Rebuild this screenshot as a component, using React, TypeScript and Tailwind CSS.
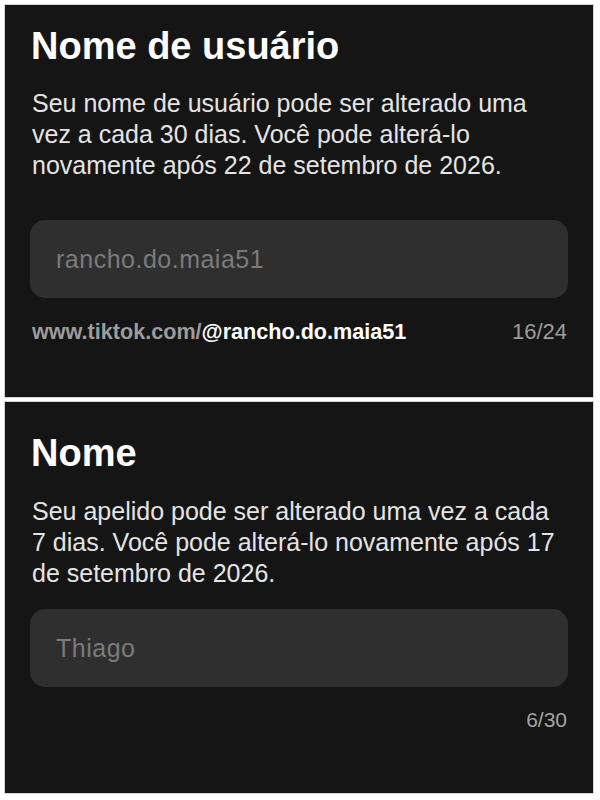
import React from "react";

function Field({ value }: { value: string }) {
  return (
    <div className="h-[78px] w-full rounded-[15px] bg-[#2f2f2f] px-[26px] flex items-center">
      <span className="text-[25px] leading-[31px] tracking-[0.5px] text-[#7b7b7b]">{value}</span>
    </div>
  );
}

export default function App() {
  return (
    <div className="w-[600px] h-[800px] bg-white pt-[4px] pl-[4px] pr-[6px] flex flex-col gap-[3px] font-['Liberation_Sans',Arial,sans-serif]">
      <section className="h-[394px] border border-[#d2d2d2] bg-[#151515] px-[25px] pt-[18px] flex flex-col">
        <h1 className="text-[38px] leading-[46px] font-bold text-white pl-[1px]">Nome de usuário</h1>
        <p className="mt-[19px] text-[25px] leading-[31px] text-[#e4e4e4] pl-[2px]">
          Seu nome de usuário pode ser alterado uma
          <br />
          vez a cada 30 dias. Você pode alterá-lo
          <br />
          novamente após 22 de setembro de 2026.
        </p>
        <div className="mt-[39px]">
          <Field value="rancho.do.maia51" />
        </div>
        <div className="mt-[20px] flex items-center justify-between leading-[28px]">
          <span className="text-[21.6px] font-bold pl-[2px]">
            <span className="text-[#9c9c9c]">www.tiktok.com/</span>
            <span className="text-white">@rancho.do.maia51</span>
          </span>
          <span className="text-[22px] text-[#9c9c9c] pr-[1px]">16/24</span>
        </div>
      </section>
      <section className="h-[393px] border border-[#d2d2d2] bg-[#151515] px-[25px] pt-[28px] flex flex-col">
        <h1 className="text-[38px] leading-[46px] font-bold text-white pl-[1px]">Nome</h1>
        <p className="mt-[20px] text-[25px] leading-[31px] text-[#e4e4e4] pl-[2px]">
          Seu apelido pode ser alterado uma vez a cada
          <br />
          7 dias. Você pode alterá-lo novamente após 17
          <br />
          de setembro de 2026.
        </p>
        <div className="mt-[20px]">
          <Field value="Thiago" />
        </div>
        <div className="mt-[19px] flex items-center justify-end leading-[28px]">
          <span className="text-[21px] text-[#a4a4a4] pr-[1px]">6/30</span>
        </div>
      </section>
    </div>
  );
}
